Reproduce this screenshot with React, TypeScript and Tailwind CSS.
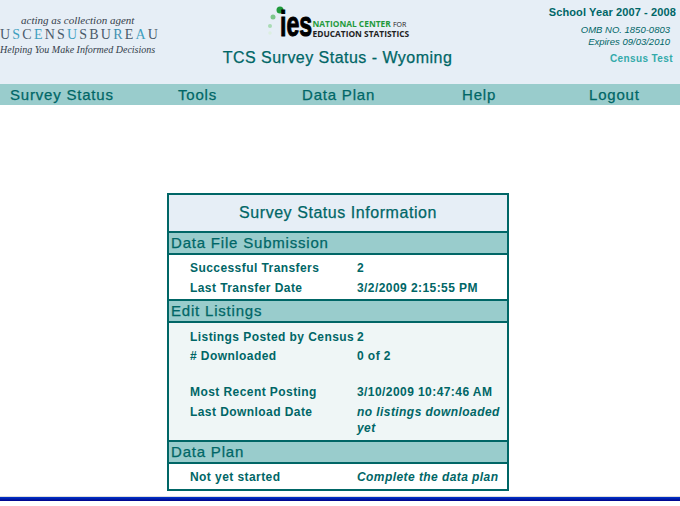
const sans = "font-['Liberation_Sans',Arial,sans-serif]";

function Row({ label, value, italic }: { label: string; value: string; italic?: boolean }) {
  return (
    <div className="grid grid-cols-[167px_1fr] pl-[21px] pr-[4px] text-[12px] font-bold leading-[16px] tracking-[0.43px] text-[#006666]">
      <div className="whitespace-nowrap">{label}</div>
      <div className={italic ? "italic" : ""}>{value}</div>
    </div>
  );
}

function Section({ title }: { title: string }) {
  return (
    <div className="h-[24px] border-y-2 border-[#006666] bg-[#99cccc] pl-[2px] text-[15px] leading-[20px] tracking-[0.8px] text-[#006666] [-webkit-text-stroke:0.25px_#006666]">
      {title}
    </div>
  );
}

function CensusLogo() {
  const letters: [string, string][] = [
    ["U", "#4a5a6a"], ["S", "#3f9fc0"], ["C", "#4a5a6a"], ["E", "#3f9fc0"], ["N", "#4a5a6a"], ["S", "#4a5a6a"],
    ["U", "#3f9fc0"], ["S", "#4a5a6a"], ["B", "#4a5a6a"], ["U", "#4a5a6a"], ["R", "#3f8fb0"], ["E", "#4a5a6a"], ["A", "#3f9fc0"], ["U", "#4a5a6a"],
  ];
  return (
    <div className="w-[170px] pt-[14px] font-['Liberation_Serif',serif] text-[#333d4a]">
      <div className="pl-[21px] text-[11px] italic leading-[12px]">acting as collection agent</div>
      <div className="flex h-[17px] items-center justify-between pr-[12px] text-[14px] leading-[17px]">
        {letters.map(([c, col], i) => (
          <span key={i} style={{ color: col }}>{c}</span>
        ))}
      </div>
      <div className="text-[10px] italic leading-[14px]">Helping You Make Informed Decisions</div>
    </div>
  );
}

function IesLogo() {
  return (
    <div className="relative flex h-[33px] w-[144px] items-end">
      <svg width="20" height="32" viewBox="0 0 20 32" className="absolute left-0 top-[0px]">
        <circle cx="14" cy="4" r="3.5" fill="#1f9a3c" />
        <circle cx="7" cy="11" r="2.5" fill="#7cc68a" />
        <circle cx="4" cy="20" r="2" fill="#a9dbb4" />
        <circle cx="4" cy="27" r="1.7" fill="#dcefe0" />
      </svg>
      <span className="ml-[14px] w-[33px] origin-left scale-x-[0.66] font-['Liberation_Sans',sans-serif] text-[35px] font-bold leading-[31px] text-black [-webkit-text-stroke:1px_#000]">ies</span>
      <div className="pb-[1px] font-['Open_Sans',sans-serif] text-[8.4px] font-bold leading-[9px] whitespace-nowrap">
        <div className="text-[#1f9a3c]">NATIONAL CENTER <span className="text-[7px] font-normal text-[#222]">FOR</span></div>
        <div className="text-[#222]">EDUCATION STATISTICS</div>
      </div>
    </div>
  );
}

export default function App() {
  return (
    <div className={`${sans} h-[506px] w-[680px] overflow-hidden bg-white text-[#006666]`}>
      <header className="grid h-[84px] grid-cols-[170px_1fr_175px] bg-[#e6eef6]">
        <CensusLogo />
        <div className="flex flex-col items-center pt-[6px]">
          <IesLogo />
          <h1 className="mt-[9px] text-[16px] leading-[20px] tracking-[0.47px] [-webkit-text-stroke:0.25px_#006666]">TCS Survey Status - Wyoming</h1>
        </div>
        <div className="flex flex-col items-end pt-[6px] pr-[4px]">
          <div className="text-[11px] font-bold leading-[13px] tracking-[0.12px]">School Year 2007 - 2008</div>
          <div className="mt-[5px] pr-[6px] text-right text-[9.5px] italic leading-[12px]">
            <div>OMB NO. 1850-0803</div>
            <div>Expires 09/03/2010</div>
          </div>
          <div className="mt-[4px] pr-[3px] text-[10px] font-bold leading-[13px] tracking-[0.4px] text-[#33aaaa]">Census Test</div>
        </div>
      </header>
      <nav className="grid h-[21px] grid-cols-[178px_124px_160px_127px_1fr] bg-[#99cccc] text-[15px] leading-[21px] tracking-[0.8px] [-webkit-text-stroke:0.25px_#006666]">
        <a className="pl-[10px]">Survey Status</a>
        <a>Tools</a>
        <a>Data Plan</a>
        <a>Help</a>
        <a>Logout</a>
      </nav>
      <main className="flex h-[391px] flex-col items-center pt-[88px]">
        <section className="ml-[-4px] w-[342px] border-x-2 border-t-2 border-[#006666] bg-white">
          <div className="h-[36px] bg-[#e6eef6] text-center text-[16px] leading-[36px] tracking-[0.55px] [-webkit-text-stroke:0.25px_#006666]">Survey Status Information</div>
          <Section title="Data File Submission" />
          <div className="flex flex-col gap-[4px] bg-white pt-[5px] pb-[3px]">
            <Row label="Successful Transfers" value="2" />
            <Row label="Last Transfer Date" value="3/2/2009 2:15:55 PM" />
          </div>
          <Section title="Edit Listings" />
          <div className="bg-[#eff6f6] pt-[6px] pb-[4px]">
            <div className="flex flex-col gap-[3px]">
              <Row label="Listings Posted by Census" value="2" />
              <Row label="# Downloaded" value="0 of 2" />
            </div>
            <div className="mt-[20px] flex flex-col gap-[4px]">
              <Row label="Most Recent Posting" value="3/10/2009 10:47:46 AM" />
              <Row label="Last Download Date" value="no listings downloaded yet" italic />
            </div>
          </div>
          <Section title="Data Plan" />
          <div className="border-b-2 border-[#006666] bg-white pt-[5px] pb-[4px]">
            <Row label="Not yet started" value="Complete the data plan" italic />
          </div>
        </section>
      </main>
      <div className="h-[1px] bg-[#dddddd]" />
      <div className="h-[4px] bg-gradient-to-b from-[#0033cc] to-[#000088]" />
    </div>
  );
}
